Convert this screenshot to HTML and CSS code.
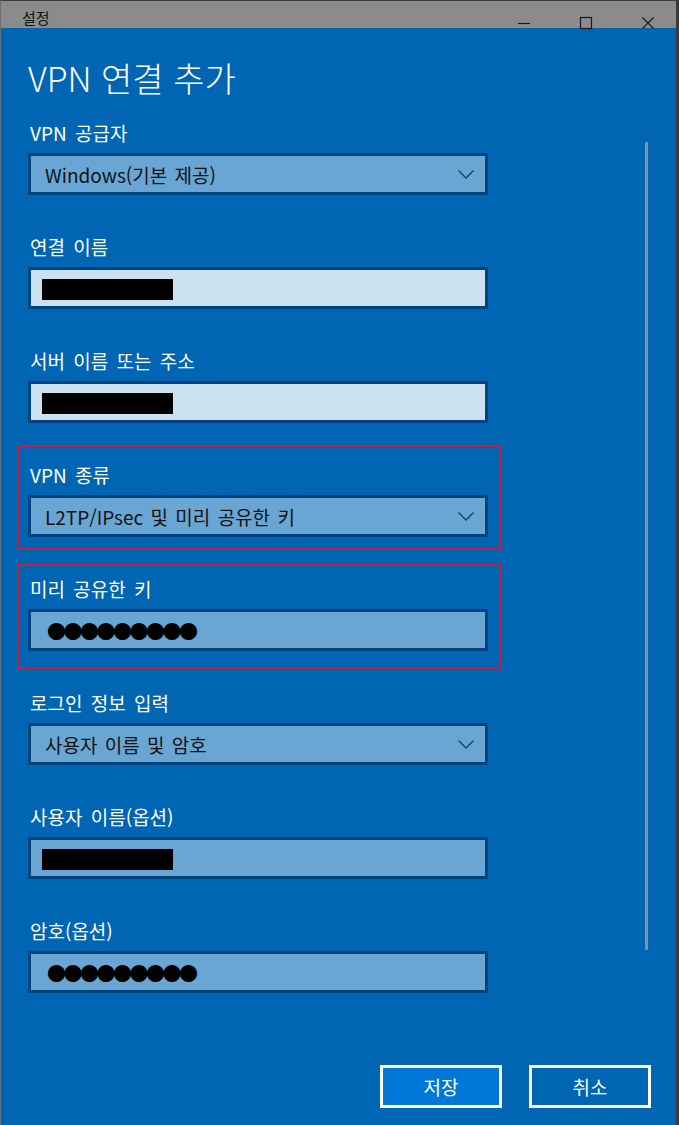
FILE: index.html
```html
<!DOCTYPE html>
<html lang="ko">
<head>
    <meta charset="UTF-8">
    <meta name="viewport" content="width=device-width, initial-scale=1.0">
    <title>설정</title>
    <link rel="stylesheet" href="styles.css">
</head>
<body>
    <div class="window">
        <div class="titlebar">
            <span class="title">설정</span>
            <div class="controls">
                <svg class="ctl ctl-min" width="14" height="14" viewBox="0 0 14 14"><path d="M1 7.5h12" /></svg>
                <svg class="ctl ctl-max" width="14" height="14" viewBox="0 0 14 14"><rect x="1.5" y="1.5" width="11" height="11" /></svg>
                <svg class="ctl ctl-close" width="14" height="14" viewBox="0 0 14 14"><path d="M1.5 1.5l11 11M12.5 1.5l-11 11" /></svg>
            </div>
        </div>

        <div class="panel">
            <div class="main">
                <div class="form">
                    <h1>VPN 연결 추가</h1>

                    <div class="field">
                        <div class="label">VPN 공급자</div>
                        <div class="box select">
                            <span>Windows(기본 제공)</span>
                            <svg class="chevron" width="16" height="9" viewBox="0 0 16 9"><path d="M0.5 0.5l7.5 7.5 7.5-7.5" /></svg>
                        </div>
                    </div>

                    <div class="field">
                        <div class="label">연결 이름</div>
                        <div class="box input light"><span class="redacted"></span></div>
                    </div>

                    <div class="field">
                        <div class="label">서버 이름 또는 주소</div>
                        <div class="box input light"><span class="redacted"></span></div>
                    </div>

                    <div class="field marked mark-a">
                        <div class="label">VPN 종류</div>
                        <div class="box select">
                            <span>L2TP/IPsec 및 미리 공유한 키</span>
                            <svg class="chevron" width="16" height="9" viewBox="0 0 16 9"><path d="M0.5 0.5l7.5 7.5 7.5-7.5" /></svg>
                        </div>
                    </div>

                    <div class="field marked mark-b">
                        <div class="label">미리 공유한 키</div>
                        <div class="box input"><span class="dots">●●●●●●●●●</span></div>
                    </div>

                    <div class="field">
                        <div class="label">로그인 정보 입력</div>
                        <div class="box select">
                            <span>사용자 이름 및 암호</span>
                            <svg class="chevron" width="16" height="9" viewBox="0 0 16 9"><path d="M0.5 0.5l7.5 7.5 7.5-7.5" /></svg>
                        </div>
                    </div>

                    <div class="field">
                        <div class="label">사용자 이름(옵션)</div>
                        <div class="box input"><span class="redacted"></span></div>
                    </div>

                    <div class="field">
                        <div class="label">암호(옵션)</div>
                        <div class="box input"><span class="dots">●●●●●●●●●</span></div>
                    </div>
                </div>
                <div class="scrollbar"></div>
            </div>

            <div class="actions">
                <button class="btn primary">저장</button>
                <button class="btn">취소</button>
            </div>
        </div>
    </div>
</body>
</html>
```

FILE: styles.css
```css
html, body {
    margin: 0;
    padding: 0;
}
body {
    width: 679px;
    height: 1125px;
    overflow: hidden;
    font-family: "Noto Sans CJK KR", sans-serif;
    background: #0065b3;
}
.window {
    height: 1125px;
    border-top: 1px solid #3c3c3c;
    border-left: 1px solid #6e6e6e;
    border-right: 3px solid #3a3a3a;
    box-sizing: border-box;
    background: #0065b3;
}

/* title bar */
.titlebar {
    height: 27px;
    background: #8b8b8b;
    display: flex;
    align-items: flex-start;
    justify-content: space-between;
    overflow: visible;
}
.title {
    margin: 7px 0 0 21px;
    font-size: 15px;
    line-height: 20px;
    color: #111;
}
.controls {
    display: flex;
    gap: 48px;
    margin: 15px 21px 0 0;
}
.ctl {
    fill: none;
    stroke: #1a1a1a;
    stroke-width: 1.2;
}

/* content */
.main {
    display: flex;
}
.form {
    flex: 1;
    padding-left: 27px;
}
h1 {
    margin: 30px 0 23px 0;
    font-size: 34px;
    line-height: 40px;
    font-weight: 300;
    color: #fff;
}
.field {
    position: relative;
    width: 460px;
    margin-bottom: 40px;
}
.label {
    font-size: 19px;
    line-height: 24px;
    word-spacing: 3px;
    color: #fff;
    margin-bottom: 8px;
    padding-left: 2px;
}
.box {
    height: 42px;
    box-sizing: border-box;
    border: 3px solid #00437d;
    background: #69a6d4;
    display: flex;
    align-items: center;
    color: #121212;
    font-size: 19px;
    word-spacing: 2px;
}
.box.light {
    background: #cce1f0;
}
.select {
    justify-content: space-between;
    padding: 0 11px 0 14px;
}
.chevron {
    fill: none;
    stroke: #1c3d60;
    stroke-width: 1.3;
}
.input {
    padding-left: 11px;
}
.redacted {
    display: block;
    width: 131px;
    height: 21px;
    background: #000;
    margin-top: 3px;
}
.dots {
    padding-left: 5px;
    font-size: 19px;
    letter-spacing: -2.5px;
    word-spacing: 0;
    color: #000;
}

/* annotation frames */
.marked::before {
    content: "";
    position: absolute;
    border: 2px solid #c6213c;
    left: -11px;
    right: -13px;
}
.mark-a::before {
    top: -18px;
    bottom: -13px;
}
.mark-b::before {
    top: -13px;
    bottom: -18px;
}

.scrollbar {
    width: 3px;
    height: 808px;
    margin: 114px 28px 0 0;
    background: #7d93ad;
}

/* buttons */
.actions {
    display: flex;
    justify-content: flex-end;
    gap: 27px;
    padding-right: 25px;
    margin-top: 32px;
}
.btn {
    width: 122px;
    height: 43px;
    border: 3px solid #fff;
    background: #0065b3;
    color: #fff;
    font-family: "Noto Sans CJK KR", sans-serif;
    font-size: 19px;
    cursor: pointer;
}
.btn.primary {
    background: #0078d7;
}
```
